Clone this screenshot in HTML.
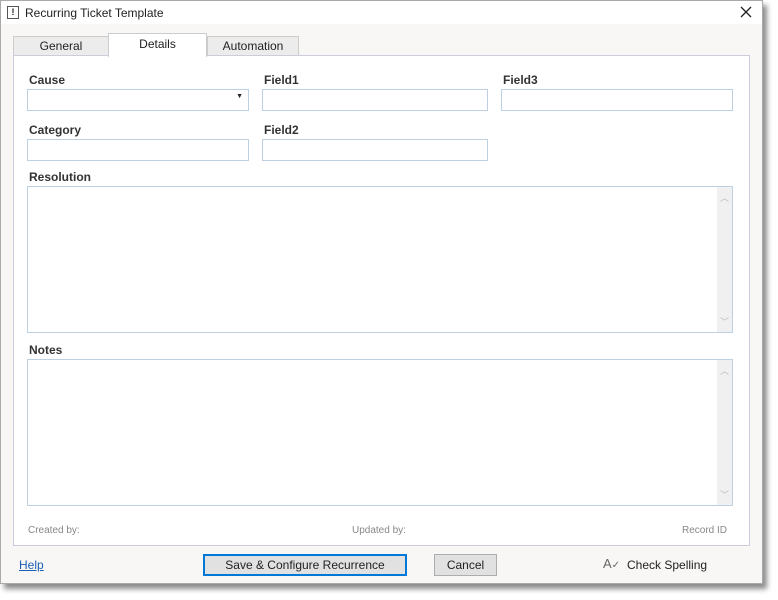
<!DOCTYPE html>
<html><head><style>
*{box-sizing:border-box;margin:0;padding:0}
body{width:778px;height:600px;background:#fff;font-family:"Liberation Sans",sans-serif;font-size:12px;color:#222;position:relative;overflow:hidden}
.win{position:absolute;left:0;top:0;width:763px;height:584px;background:#f8f7f6;border:1px solid #aaa;box-shadow:4px 5px 5px rgba(0,0,0,.45)}
.c{position:absolute;left:-1px;top:-1px;width:763px;height:584px}
.title{position:absolute;left:1px;top:1px;width:761px;height:23px;background:#fff}
.title .ic{position:absolute;left:6px;top:5px;width:12px;height:13px;border:1px solid #555;font-size:9px;font-weight:bold;text-align:center;line-height:11px}
.title .t{position:absolute;left:24px;top:5px;font-size:12px}
.title svg{position:absolute;left:739px;top:5px}
.tab{position:absolute;top:36px;height:20px;background:#ececec;border:1px solid #ccc;text-align:center;line-height:18px;font-size:12px}
.panel{position:absolute;left:13px;top:55px;width:737px;height:491px;background:#fff;border:1px solid #ccd}
.lbl{position:absolute;font-weight:bold;font-size:12px;color:#333}
.in{position:absolute;height:22px;border:1px solid #bcd0e2;background:#fff}
.ta{position:absolute;border:1px solid #bcd0e2;background:#fff}
.sb{position:absolute;right:0;top:0;width:15px;height:100%;background:#f0f0f0;color:#bbb;font-size:9px;text-align:center}
.sm{position:absolute;font-size:10px;color:#888}
.btn{position:absolute;top:554px;height:22px;background:#e1e1e1;border:1px solid #adadad;text-align:center;line-height:20px;font-size:12px}
</style></head><body>
<div class="win"><div class="c">
<div class="title"><div class="ic">!</div><div class="t">Recurring Ticket Template</div><svg width="12" height="12"><path d="M1 1L11 11M11 1L1 11" stroke="#222" stroke-width="1.3"/></svg></div>
<div class="tab" style="left:13px;width:96px">General</div>
<div class="tab" style="left:207px;width:92px">Automation</div>
<div class="panel"></div>
<div class="tab" style="left:108px;top:33px;width:99px;height:24px;background:#fff;border-bottom:none;line-height:20px">Details</div>
<div class="lbl" style="left:29px;top:73px">Cause</div>
<div class="in" style="left:27px;top:89px;width:222px"><span style="position:absolute;right:5px;top:3px;font-size:7px">▼</span></div>
<div class="lbl" style="left:264px;top:73px">Field1</div>
<div class="in" style="left:262px;top:89px;width:226px"></div>
<div class="lbl" style="left:503px;top:73px">Field3</div>
<div class="in" style="left:501px;top:89px;width:232px"></div>
<div class="lbl" style="left:29px;top:123px">Category</div>
<div class="in" style="left:27px;top:139px;width:222px"></div>
<div class="lbl" style="left:264px;top:123px">Field2</div>
<div class="in" style="left:262px;top:139px;width:226px"></div>
<div class="lbl" style="left:29px;top:170px">Resolution</div>
<div class="ta" style="left:27px;top:186px;width:706px;height:147px"><div class="sb"><div style="position:absolute;top:4px;width:100%">︿</div><div style="position:absolute;bottom:4px;width:100%">﹀</div></div></div>
<div class="lbl" style="left:29px;top:343px">Notes</div>
<div class="ta" style="left:27px;top:359px;width:706px;height:147px"><div class="sb"><div style="position:absolute;top:4px;width:100%">︿</div><div style="position:absolute;bottom:4px;width:100%">﹀</div></div></div>
<div class="sm" style="left:28px;top:525px">Created by:</div>
<div class="sm" style="left:352px;top:525px">Updated by:</div>
<div class="sm" style="left:682px;top:525px">Record ID</div>
<div style="position:absolute;left:19px;top:558px;color:#1a5fb4;text-decoration:underline">Help</div>
<div class="btn" style="left:203px;width:204px;border:1px solid #0078d7;box-shadow:inset 0 0 0 1px #0078d7">Save &amp; Configure Recurrence</div>
<div class="btn" style="left:434px;width:63px">Cancel</div>
<div style="position:absolute;left:603px;top:556px;color:#666;font-size:13px">A<span style="font-size:10px">✓</span></div>
<div style="position:absolute;left:627px;top:558px">Check Spelling</div>
</div></div>
</body></html>
